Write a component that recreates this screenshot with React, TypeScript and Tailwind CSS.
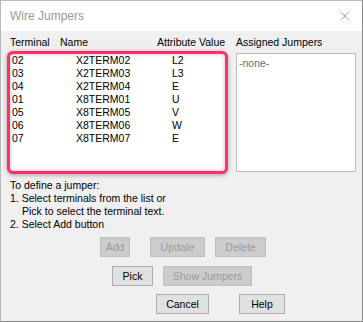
import { X } from 'lucide-react';

const rows = [
  { terminal: '02', name: 'X2TERM02', value: 'L2' },
  { terminal: '03', name: 'X2TERM03', value: 'L3' },
  { terminal: '04', name: 'X2TERM04', value: 'E' },
  { terminal: '01', name: 'X8TERM01', value: 'U' },
  { terminal: '05', name: 'X8TERM05', value: 'V' },
  { terminal: '06', name: 'X8TERM06', value: 'W' },
  { terminal: '07', name: 'X8TERM07', value: 'E' },
];

function Btn({ label, width, disabled }: { label: string; width: string; disabled?: boolean }) {
  return (
    <div
      className={`${width} h-[20px] flex items-center justify-center border ${
        disabled ? 'bg-[#cccccc] border-[#bfbfbf] text-[#9c9c9c]' : 'bg-[#e1e1e1] border-[#adadad] text-black'
      }`}
    >
      {label}
    </div>
  );
}

export default function App() {
  return (
    <div
      className="w-[363px] h-[322px] flex flex-col border-l border-t border-[#b9b9b9] border-r border-b border-r-[#8a8a8a] border-b-[#8a8a8a] text-[10.5px] leading-[13px] text-black"
      style={{ fontFamily: '"Liberation Sans", Arial, sans-serif' }}
    >
      {/* Title bar */}
      <div className="h-[30px] bg-white flex items-center justify-between pl-[9px] pr-[8px]">
        <span className="text-[12px] text-[#9a9a9a]">Wire Jumpers</span>
        <X className="w-[14px] h-[14px] text-[#7a7a7a] mr-[2px]" strokeWidth={1.2} />
      </div>

      {/* Body */}
      <div className="flex-1 bg-[#f0f0f0] flex flex-col">
        {/* Column headers */}
        <div className="flex mt-[5px] h-[13px]">
          <span className="ml-[9px] w-[50px]">Terminal</span>
          <span className="w-[97px]">Name</span>
          <span className="w-[79px]">Attribute Value</span>
          <span>Assigned Jumpers</span>
        </div>

        <div className="flex items-start mt-[2px]">
          {/* Terminal list (highlighted) */}
          <div className="ml-[6px] w-[221px] h-[123px] bg-white border-[3px] border-[#ff2e6c] rounded-[6px] shadow-[0_1px_4px_rgba(0,0,0,0.35),inset_0_0_4px_rgba(0,0,0,0.25)] flex flex-col">
            {rows.map((r) => (
              <div key={r.terminal + r.name} className="flex h-[13px]">
                <span className="ml-[2px] w-[64px]">{r.terminal}</span>
                <span className="w-[96px]">{r.name}</span>
                <span>{r.value}</span>
              </div>
            ))}
          </div>

          {/* Assigned jumpers */}
          <div className="ml-[8px] mt-[2px] w-[120px] h-[119px] bg-white border border-[#bcbcbc] pl-[2px] pt-[3px]">
            <span className="text-[#6d6d6d]">-none-</span>
          </div>
        </div>

        {/* Instructions */}
        <div className="mt-[5px] ml-[9px] flex flex-col">
          <span>To define a jumper:</span>
          <span>1. Select terminals from the list or</span>
          <span className="pl-[12px]">Pick to select the terminal text.</span>
          <span>2. Select Add button</span>
        </div>

        {/* Buttons */}
        <div className="flex mt-[6px] ml-[99px] gap-[20px]">
          <Btn label="Add" width="w-[30px]" disabled />
          <div className="flex gap-[10px]">
            <Btn label="Update" width="w-[55px]" disabled />
            <Btn label="Delete" width="w-[51px]" disabled />
          </div>
        </div>
        <div className="flex mt-[9px] ml-[111px] gap-[10px]">
          <Btn label="Pick" width="w-[41px]" />
          <Btn label="Show Jumpers" width="w-[89px]" disabled />
        </div>
        <div className="flex mt-[8px] ml-[155px] gap-[30px]">
          <Btn label="Cancel" width="w-[53px]" />
          <Btn label="Help" width="w-[46px]" />
        </div>
      </div>
    </div>
  );
}
